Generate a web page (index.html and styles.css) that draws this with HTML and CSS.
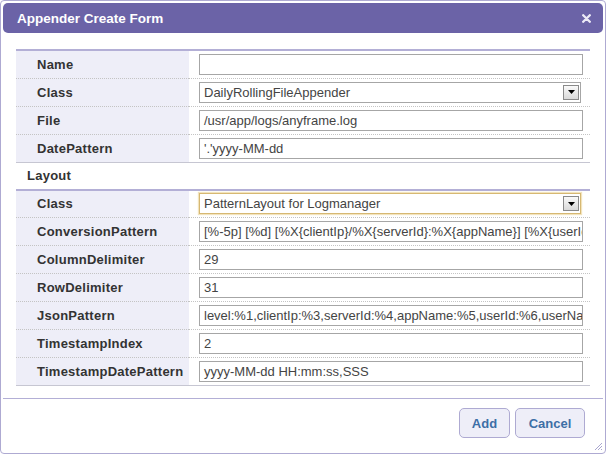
FILE: index.html
```html
<!DOCTYPE html>
<html>
<head>
<meta charset="utf-8">
<link rel="stylesheet" href="styles.css">
</head>
<body>
<div class="dialog">
  <div class="titlebar">
    <span class="title">Appender Create Form</span>
    <svg class="close" width="9" height="9" viewBox="0 0 9 9"><path d="M1.2 1.2 L7.8 7.8 M7.8 1.2 L1.2 7.8" stroke="#eceaf6" stroke-width="2.3" stroke-linecap="round"/></svg>
  </div>
  <div class="content">
    <table class="form">
      <colgroup><col class="c1"><col class="c2"></colgroup>
      <tr><td class="label">Name</td><td class="field"><div class="input"></div></td></tr>
      <tr><td class="label">Class</td><td class="field"><div class="select"><span class="val">DailyRollingFileAppender</span><span class="arrow"><svg width="7" height="4" viewBox="0 0 7 4"><path d="M0 0 H7 L3.5 4 Z" fill="#000"/></svg></span></div></td></tr>
      <tr><td class="label">File</td><td class="field"><div class="input">/usr/app/logs/anyframe.log</div></td></tr>
      <tr class="last"><td class="label">DatePattern</td><td class="field"><div class="input">'.'yyyy-MM-dd</div></td></tr>
    </table>
    <div class="section">Layout</div>
    <table class="form">
      <colgroup><col class="c1"><col class="c2"></colgroup>
      <tr><td class="label">Class</td><td class="field"><div class="select focus"><span class="val">PatternLayout for Logmanager</span><span class="arrow"><svg width="7" height="4" viewBox="0 0 7 4"><path d="M0 0 H7 L3.5 4 Z" fill="#000"/></svg></span></div></td></tr>
      <tr><td class="label">ConversionPattern</td><td class="field"><div class="input">[%-5p] [%d] [%X{clientIp}/%X{serverId}:%X{appName}] [%X{userId}] [%X{userName}]</div></td></tr>
      <tr><td class="label">ColumnDelimiter</td><td class="field"><div class="input">29</div></td></tr>
      <tr><td class="label">RowDelimiter</td><td class="field"><div class="input">31</div></td></tr>
      <tr><td class="label">JsonPattern</td><td class="field"><div class="input">level:%1,clientIp:%3,serverId:%4,appName:%5,userId:%6,userName:%7</div></td></tr>
      <tr><td class="label">TimestampIndex</td><td class="field"><div class="input">2</div></td></tr>
      <tr class="last"><td class="label">TimestampDatePattern</td><td class="field"><div class="input">yyyy-MM-dd HH:mm:ss,SSS</div></td></tr>
    </table>
  </div>
  <div class="footer">
    <button class="btn add">Add</button>
    <button class="btn cancel">Cancel</button>
  </div>
  <svg class="grip" width="9" height="9" viewBox="0 0 9 9"><path d="M8 1 L1 8 M8 4 L4 8 M8 7 L7 8" stroke="#a9a6cf" stroke-width="1"/></svg>
</div>
</body>
</html>
```
FILE: styles.css
```css
html, body {
  margin: 0;
  padding: 0;
  background: #ffffff;
}
body {
  font-family: "Liberation Sans", Arial, sans-serif;
}
.dialog {
  position: relative;
  width: 606px;
  height: 454px;
  box-sizing: border-box;
  border: 1px solid #aeaad2;
  border-radius: 4px;
  background: #ffffff;
  overflow: hidden;
}
.titlebar {
  margin: 2px 2px 0 2px;
  height: 30px;
  background: #6b63a7;
  border-radius: 5px;
  display: flex;
  align-items: center;
  justify-content: space-between;
  padding: 0 12px 0 14px;
}
.title {
  color: #ffffff;
  font-weight: bold;
  font-size: 13.5px;
}
.close {
  display: block;
  margin-top: 1px;
}
.content {
  padding: 16px 15px 0 15px;
}
.form {
  width: 574px;
  table-layout: fixed;
  border-collapse: collapse;
  border-top: 2px solid #b3afd6;
}
.form col.c1 {
  width: 173px;
}
.form td {
  height: 28px;
  padding: 0;
  border-bottom: 1px dotted #c4c4c4;
  box-sizing: border-box;
}
.form tr.last td {
  border-bottom: 1px solid #c6c6d2;
}
.label {
  background: #eeeef8;
  padding-left: 21px !important;
  font-weight: bold;
  font-size: 13px;
  letter-spacing: 0.25px;
  color: #333333;
  white-space: nowrap;
}
.field {
  padding: 0 7px 0 10px !important;
}
.input {
  height: 21px;
  box-sizing: border-box;
  border: 1px solid #a6a6a6;
  padding: 0 4px;
  font-size: 13px;
  line-height: 19px;
  color: #444444;
  white-space: nowrap;
  overflow: hidden;
  background: #ffffff;
}
.select {
  height: 21px;
  box-sizing: border-box;
  border: 1px solid #a6a6a6;
  display: flex;
  align-items: center;
  justify-content: space-between;
  padding: 0 1px 0 4px;
  font-size: 13px;
  color: #444444;
  margin-right: 2px;
  background: #ffffff;
}
.select.focus {
  border-color: #d6b872;
  box-shadow: 0 0 1px 1px #f2e3bd;
}
.arrow {
  width: 16px;
  height: 15px;
  box-sizing: border-box;
  border: 1px solid #8a8a8a;
  background: linear-gradient(#fafafa, #d9d9d9);
  display: flex;
  align-items: center;
  justify-content: center;
}
.arrow svg {
  display: block;
}
.section {
  height: 26px;
  line-height: 26px;
  padding-left: 11px;
  font-weight: bold;
  font-size: 13px;
  letter-spacing: 0.25px;
  color: #333333;
}
.footer {
  margin: 12px 2px 0 2px;
  border-top: 1px solid #b3afd6;
  padding: 9px 18px 0 0;
  display: flex;
  justify-content: flex-end;
  gap: 5px;
}
.btn {
  height: 30px;
  box-sizing: border-box;
  border: 1px solid #aeaad2;
  border-radius: 5px;
  background: #eeeef8;
  color: #3d6ea6;
  font-family: "Liberation Sans", Arial, sans-serif;
  font-weight: bold;
  font-size: 13px;
  padding: 0;
}
.btn.add {
  width: 51px;
}
.btn.cancel {
  width: 70px;
}
.grip {
  position: absolute;
  right: 2px;
  bottom: 2px;
}
```
